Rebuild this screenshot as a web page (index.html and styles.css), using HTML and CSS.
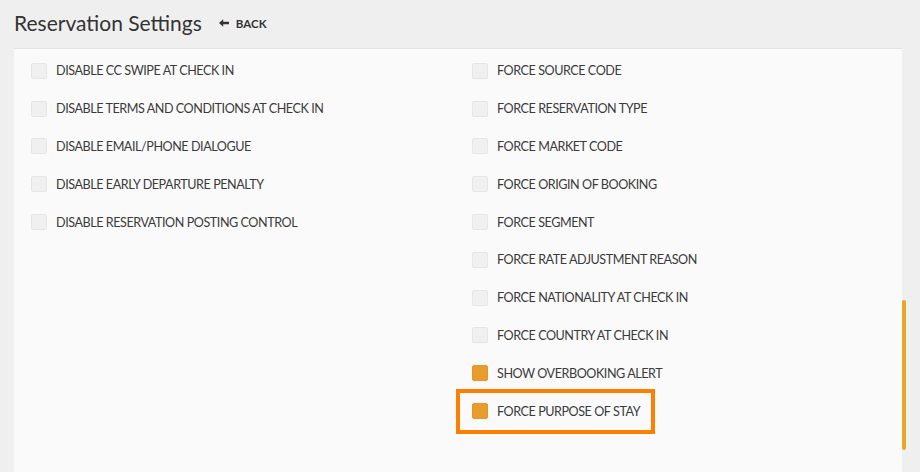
FILE: index.html
```html
<!DOCTYPE html>
<html>
<head>
<meta charset="utf-8">
<link rel="stylesheet" href="styles.css">
</head>
<body>
<header class="topbar">
  <h1 class="title">Reservation Settings</h1>
  <a class="back"><svg class="back-arrow" width="10" height="8" viewBox="0 0 10 8"><path d="M0 4 L4.2 0.3 L4.2 2.8 L10 2.8 L10 5.2 L4.2 5.2 L4.2 7.7 Z" fill="#333"/></svg>BACK</a>
</header>
<main class="panel">
  <div class="grid">
    <div class="col">
      <label class="row"><span class="box"></span>DISABLE CC SWIPE AT CHECK IN</label>
      <label class="row"><span class="box"></span>DISABLE TERMS AND CONDITIONS AT CHECK IN</label>
      <label class="row"><span class="box"></span>DISABLE EMAIL/PHONE DIALOGUE</label>
      <label class="row"><span class="box"></span>DISABLE EARLY DEPARTURE PENALTY</label>
      <label class="row"><span class="box"></span>DISABLE RESERVATION POSTING CONTROL</label>
    </div>
    <div class="col">
      <label class="row"><span class="box"></span>FORCE SOURCE CODE</label>
      <label class="row"><span class="box"></span>FORCE RESERVATION TYPE</label>
      <label class="row"><span class="box"></span>FORCE MARKET CODE</label>
      <label class="row"><span class="box"></span>FORCE ORIGIN OF BOOKING</label>
      <label class="row"><span class="box"></span>FORCE SEGMENT</label>
      <label class="row"><span class="box"></span>FORCE RATE ADJUSTMENT REASON</label>
      <label class="row"><span class="box"></span>FORCE NATIONALITY AT CHECK IN</label>
      <label class="row"><span class="box"></span>FORCE COUNTRY AT CHECK IN</label>
      <label class="row"><span class="box checked"></span>SHOW OVERBOOKING ALERT</label>
      <label class="row highlight"><span class="box checked"></span>FORCE PURPOSE OF STAY</label>
    </div>
  </div>
  <div class="scrollbar"></div>
</main>
</body>
</html>
```
FILE: styles.css
```css
html, body {
  margin: 0;
  padding: 0;
  height: 100%;
  overflow: hidden;
}
body {
  background: #efefef;
  font-family: Lato, "Liberation Sans", sans-serif;
  color: #3a3a3a;
  display: flex;
  flex-direction: column;
}
.topbar {
  height: 48px;
  display: flex;
  align-items: center;
  padding: 0 0 4px 14px;
  box-sizing: border-box;
  flex: none;
}
.title {
  margin: 0;
  font-weight: 400;
  font-size: 21px;
  color: #333;
}
.back {
  margin-left: 17px;
  font-size: 11.5px;
  font-weight: 700;
  color: #333;
  display: flex;
  align-items: center;
  gap: 7px;
  margin-top: 2px;
}
.panel {
  position: relative;
  flex: 1;
  margin: 0 18px 0 14px;
  background: #fafafa;
  border-top: 1px solid #e2e2e2;
}
.grid {
  display: grid;
  grid-template-columns: 441px 1fr;
  padding: 3px 0 0 17px;
}
.col {
  display: flex;
  flex-direction: column;
}
.row {
  height: 37.8px;
  display: flex;
  align-items: center;
  font-size: 12.6px;
  letter-spacing: -0.45px;
  color: #3a3a3a;
  position: relative;
}
.box {
  width: 16px;
  height: 16px;
  box-sizing: border-box;
  background: #f0f0f0;
  border: 1px solid #e6e6e6;
  border-radius: 2px;
  margin-right: 9px;
  flex: none;
}
.box.checked {
  background: #e99b2b;
  border-color: #e3962a;
}
.highlight::after {
  content: "";
  position: absolute;
  left: -16px;
  top: -3px;
  width: 199px;
  height: 45px;
  box-sizing: border-box;
  border: 4px solid #ff7f00;
}
.scrollbar {
  position: absolute;
  right: -4px;
  top: 251px;
  width: 4px;
  height: 150px;
  border-radius: 2px;
  background: #eba623;
}
```
